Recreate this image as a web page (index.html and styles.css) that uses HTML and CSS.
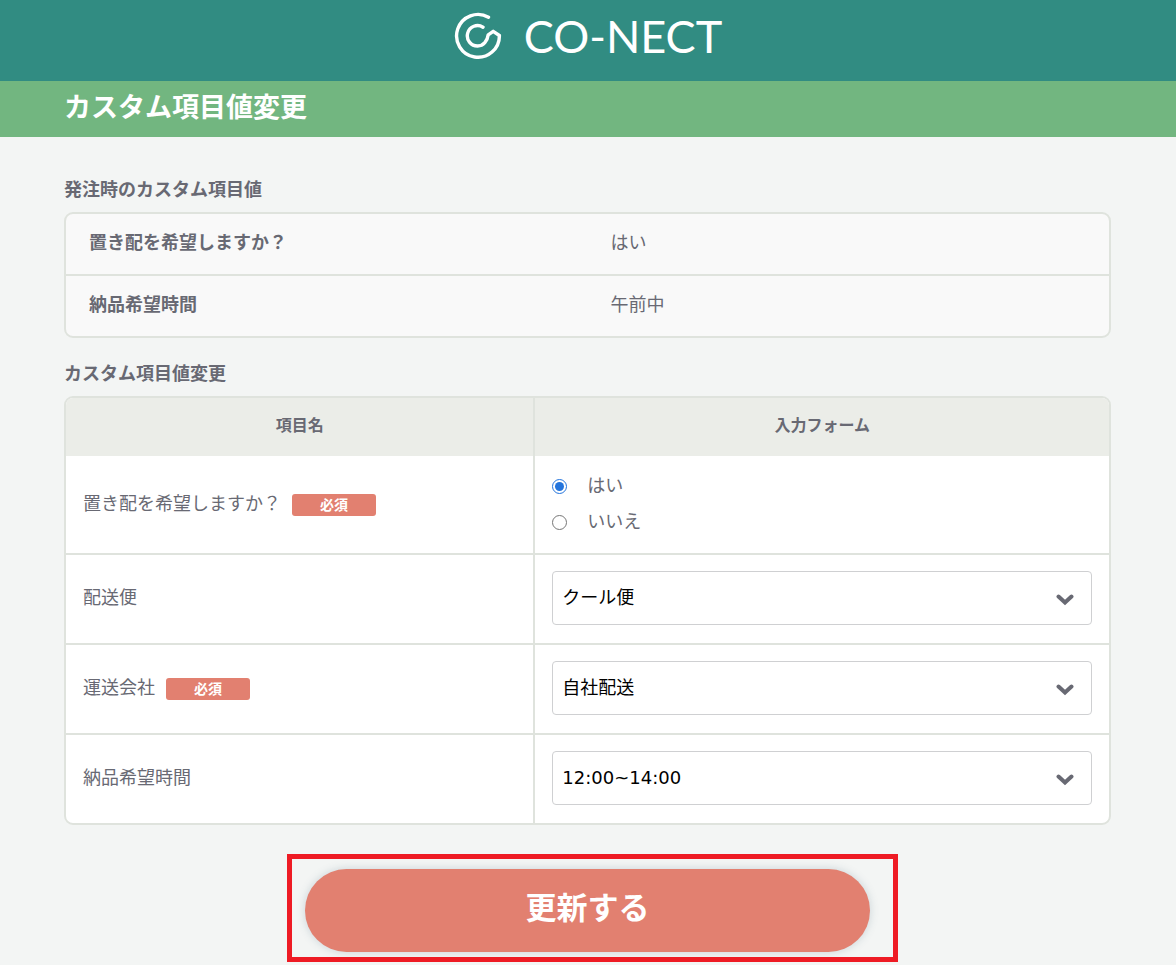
FILE: index.html
```html
<!DOCTYPE html>
<html lang="ja">
<head>
<meta charset="utf-8">
<meta name="viewport" content="width=device-width, initial-scale=1">
<title>カスタム項目値変更 | CO-NECT</title>
<link rel="stylesheet" href="styles.css">
</head>
<body>
<header class="site-header">
  <svg class="logo-mark" width="48" height="48" viewBox="0 0 48 48" aria-hidden="true">
    <path d="M34.5 5.2A21.4 21.4 0 1 0 45.4 23.5L39.2 19.3L34.2 22.8C33.4 29 29.5 34 23.8 34A10.2 10.2 0 1 1 29 15.2"/>
  </svg>
  <span class="logo-text">CO-NECT</span>
</header>
<div class="title-bar">
  <h1 class="container page-title">カスタム項目値変更</h1>
</div>
<main class="container">
  <h2 class="section-title">発注時のカスタム項目値</h2>
  <dl class="summary">
    <div class="summary-row"><dt>置き配を希望しますか？</dt><dd>はい</dd></div>
    <div class="summary-row"><dt>納品希望時間</dt><dd>午前中</dd></div>
  </dl>
  <h2 class="section-title">カスタム項目値変更</h2>
  <form class="edit-form">
    <table class="fields">
      <thead>
        <tr><th scope="col" class="name-col">項目名</th><th scope="col">入力フォーム</th></tr>
      </thead>
      <tbody>
        <tr>
          <td><span id="drop-label">置き配を希望しますか？</span><em class="badge">必須</em></td>
          <td>
            <div class="choices" role="radiogroup" aria-labelledby="drop-label">
              <label class="choice"><input type="radio" name="drop" checked>はい</label>
              <label class="choice"><input type="radio" name="drop">いいえ</label>
            </div>
          </td>
        </tr>
        <tr>
          <td><label for="service">配送便</label></td>
          <td><div class="select-box"><select id="service"><option>クール便</option></select><svg class="chevron" viewBox="0 0 18 12" aria-hidden="true"><path d="M2.5 2.5L9 8.5L15.5 2.5"/></svg></div></td>
        </tr>
        <tr>
          <td><label for="carrier">運送会社</label><em class="badge">必須</em></td>
          <td><div class="select-box"><select id="carrier"><option>自社配送</option></select><svg class="chevron" viewBox="0 0 18 12" aria-hidden="true"><path d="M2.5 2.5L9 8.5L15.5 2.5"/></svg></div></td>
        </tr>
        <tr>
          <td><label for="time">納品希望時間</label></td>
          <td><div class="select-box"><select id="time"><option>12:00~14:00</option></select><svg class="chevron" viewBox="0 0 18 12" aria-hidden="true"><path d="M2.5 2.5L9 8.5L15.5 2.5"/></svg></div></td>
        </tr>
      </tbody>
    </table>
    <div class="submit-area">
      <button class="submit" type="submit">更新する</button>
      <div class="highlight" aria-hidden="true"></div>
    </div>
  </form>
</main>
</body>
</html>
```

FILE: styles.css
```css
* { box-sizing: border-box; }

body {
  margin: 0;
  background: #f3f5f4;
  color: #686973;
  font: 18px/36px "DejaVu Sans", "Noto Sans CJK JP", sans-serif;
}

.container {
  margin: 0;
  padding: 0 65px 0 64px;
}

.site-header {
  display: flex;
  justify-content: center;
  align-items: center;
  gap: 22px;
  padding: 12px 0 21px;
  background: #318c82;
  color: #fff;
}

.logo-mark {
  fill: none;
  stroke: #fff;
  stroke-width: 3.4;
  stroke-linecap: round;
  stroke-linejoin: round;
}

.logo-text {
  font: 400 45px/48px Lato, sans-serif;
}

.title-bar {
  background: #72b680;
  padding: 7px 0 9px;
}

.page-title {
  color: #fff;
  font-size: 27px;
  font-weight: 700;
  line-height: 40px;
}

.section-title {
  margin: 0;
  padding: 18px 0 4px;
  font-size: 18px;
  font-weight: 700;
  line-height: 36px;
}

main .section-title:first-child { padding-top: 35px; }

.summary {
  margin: 0;
  border: 2px solid #dfe3dd;
  border-radius: 9px;
  background: #f9f9f9;
}

.summary-row {
  display: grid;
  grid-template-columns: 1fr 1fr;
  padding: 11px 0 13px;
}

.summary-row + .summary-row { border-top: 2px solid #dfe3dd; }
.summary dt { padding-left: 23px; font-weight: 700; }
.summary dd { margin: 0; padding-left: 23px; }

.fields {
  width: 100%;
  table-layout: fixed;
  border: 2px solid #dfe3dd;
  border-radius: 9px;
  border-spacing: 0;
  background: #fff;
  overflow: hidden;
}

.fields th {
  padding: 10px 0 12px;
  background: #ebede8;
  font-size: 16px;
  font-weight: 700;
}

.name-col { width: 45%; }

.fields td {
  padding: 16px 17px;
  border-bottom: 2px solid #dfe3dd;
}

.fields td:first-child { padding-bottom: 18px; }
.fields tr > :first-child { border-right: 2px solid #dfe3dd; }
.fields tbody tr:last-child td { border-bottom: 0; }

.badge {
  display: inline-block;
  width: 84px;
  margin-left: 11px;
  border-radius: 3px;
  background: #e28070;
  color: #fff;
  font-size: 14px;
  font-style: normal;
  font-weight: 700;
  line-height: 22px;
  text-align: center;
}

.choices { margin: -4px 0 -3px; }

.choice {
  display: flex;
  align-items: center;
  gap: 20px;
}

.choice input {
  width: 15px;
  height: 15px;
  margin: 0;
  accent-color: #2374dc;
}

.select-box { position: relative; padding-bottom: 2px; }

.select-box select {
  display: block;
  width: 100%;
  height: 54px;
  padding: 0 40px 1px 9px;
  border: 1px solid #cfd0d2;
  border-radius: 4px;
  appearance: none;
  background: #fff;
  color: #000;
  font: inherit;
}

.chevron {
  position: absolute;
  top: 23px;
  right: 18px;
  width: 18px;
  height: 12px;
  fill: none;
  stroke: #686973;
  stroke-width: 4;
  stroke-linecap: round;
  pointer-events: none;
}

.submit-area {
  position: relative;
  width: 54%;
  margin: 44px auto 13px;
}

.submit {
  display: block;
  width: 100%;
  padding: 15px 0 20px;
  border: 0;
  border-radius: 42px;
  background: #e28070;
  box-shadow: 0 0 8px rgba(80, 110, 130, 0.25);
  color: #fff;
  font: inherit;
  font-size: 31px;
  font-weight: 700;
  line-height: 48px;
}

.highlight {
  position: absolute;
  inset: -15px -28px -10px -18px;
  border: 5px solid #ee1b24;
  pointer-events: none;
}
```
